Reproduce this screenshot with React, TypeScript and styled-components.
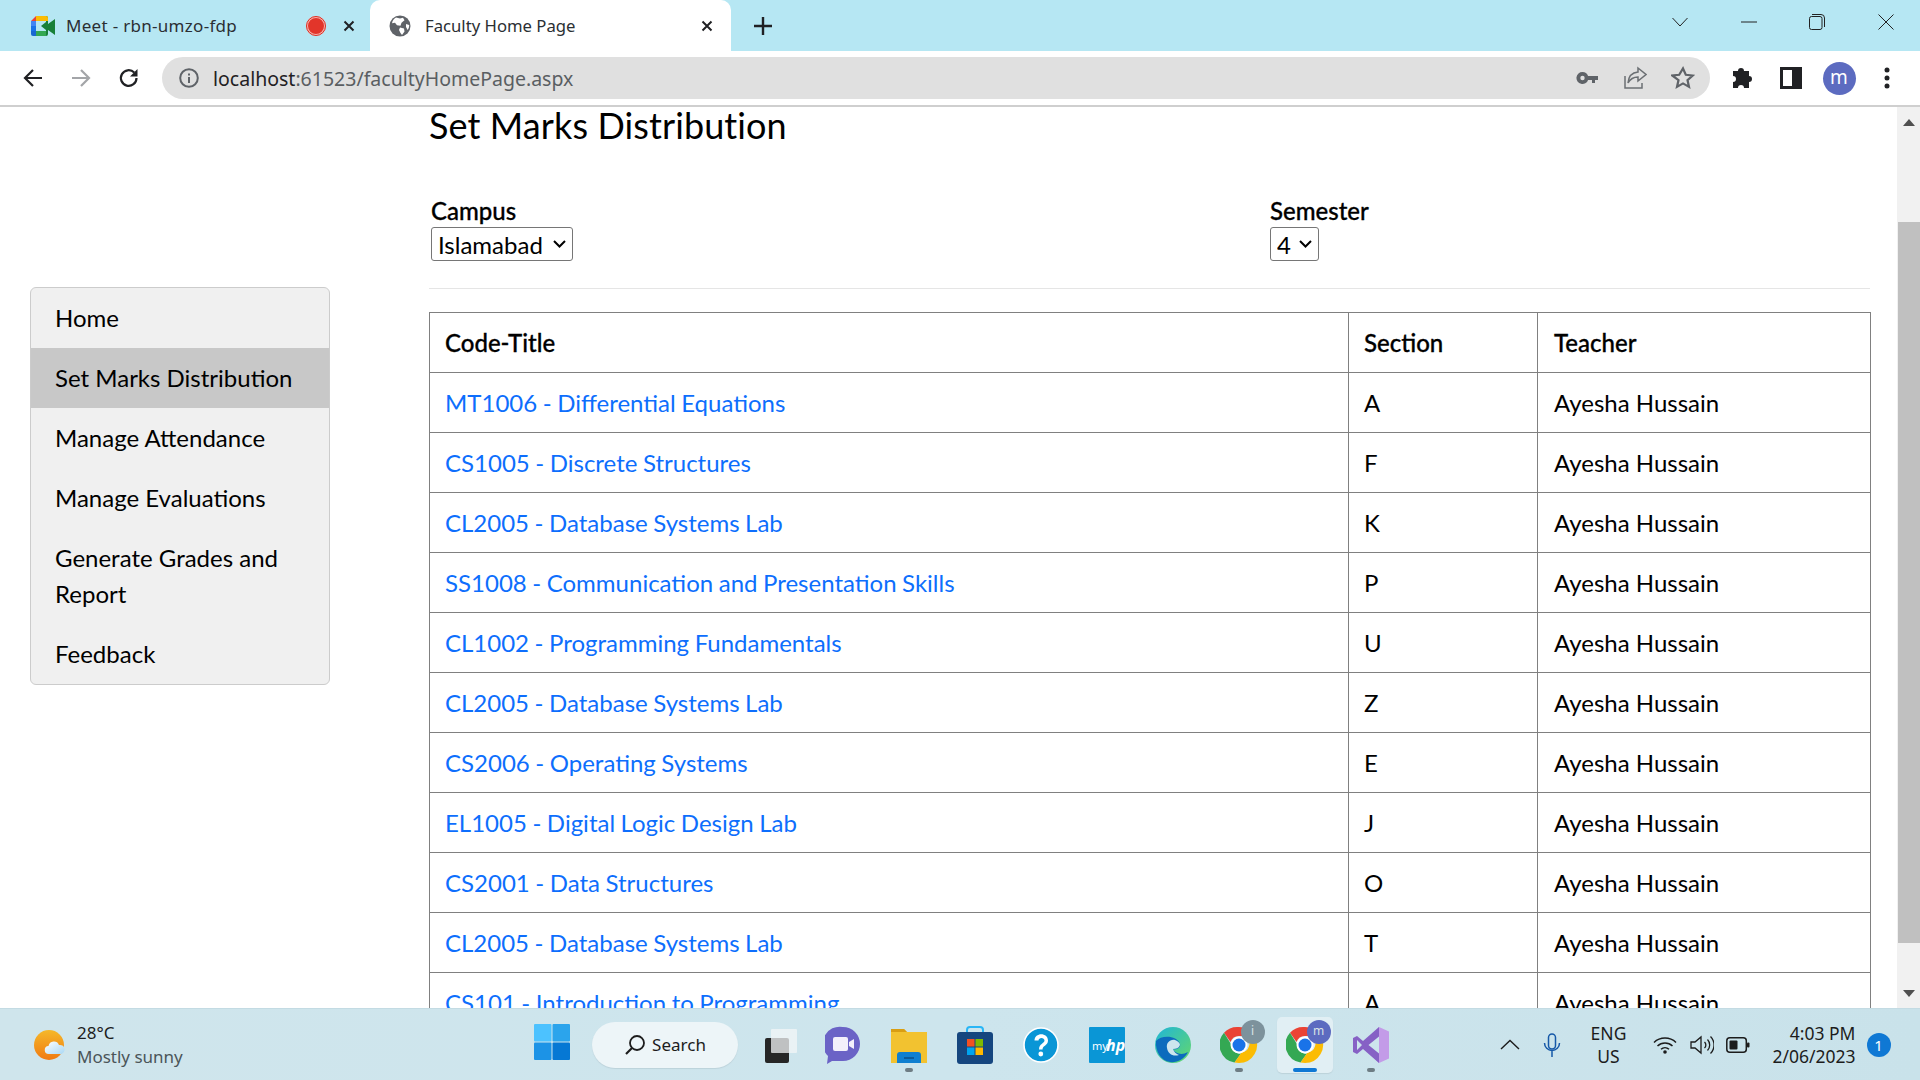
import React from 'react';
import styled, { createGlobalStyle } from 'styled-components';

const GlobalStyle = createGlobalStyle`
    html, body {
        margin: 0;
        padding: 0;
        height: 100%;
        overflow: hidden;
        background: #fff;
    }
    * {
        box-sizing: border-box;
    }
`;

const UI_FONT = `"Noto Sans", "Open Sans", sans-serif`;

const SELECT_ARROW = `url("data:image/svg+xml,%3Csvg xmlns='http://www.w3.org/2000/svg' width='13' height='8'%3E%3Cpath d='M1 1l5.500 5.500L12 1' stroke='%23000' stroke-width='2' fill='none'/%3E%3C/svg%3E")`;

interface Course {
    title: string;
    section: string;
}

const courses: Course[] = [
    { title: 'MT1006 - Differential Equations', section: 'A' },
    { title: 'CS1005 - Discrete Structures', section: 'F' },
    { title: 'CL2005 - Database Systems Lab', section: 'K' },
    { title: 'SS1008 - Communication and Presentation Skills', section: 'P' },
    { title: 'CL1002 - Programming Fundamentals', section: 'U' },
    { title: 'CL2005 - Database Systems Lab', section: 'Z' },
    { title: 'CS2006 - Operating Systems', section: 'E' },
    { title: 'EL1005 - Digital Logic Design Lab', section: 'J' },
    { title: 'CS2001 - Data Structures', section: 'O' },
    { title: 'CL2005 - Database Systems Lab', section: 'T' },
    { title: 'CS101 - Introduction to Programming', section: 'A' },
];

const menu = ['Home', 'Set Marks Distribution', 'Manage Attendance', 'Manage Evaluations', 'Generate Grades and Report', 'Feedback'];

const MeetIcon = () => (
    <svg width="24" height="20" viewBox="0 0 24 20">
        <path d="M5 0h10v5H5v5H0V5z" fill="#ea4335" />
        <path d="M5 0h10v5H5z" fill="#fbbc04" />
        <path d="M0 5h5v5H0z" fill="#4285f4" />
        <path d="M0 10h5v5H0z" fill="#1a73e8" />
        <path d="M0 15h5v5H2a2 2 0 0 1-2-2z" fill="#1967d2" />
        <path d="M5 15h10v5H5z" fill="#34a853" />
        <path d="M15 0v6l-5 4 5 4v6a2 2 0 0 0 2-2v-4l7 5V3l-7 5V2a2 2 0 0 0-2-2z" fill="#188038" />
        <path d="M15 0h-2v5h4V2a2 2 0 0 0-2-2z" fill="#fbbc04" />
    </svg>
);

const GlobeIcon = () => (
    <svg width="22" height="22" viewBox="0 0 22 22">
        <circle cx="11" cy="11" r="10.500" fill="#5f6368" />
        <path d="M7 2.500l4 1 3-.8 1.500 2.500-3 2.500-1 3-3.500-.5-2-2.500-3 .5C3.500 5.500 5 3.500 7 2.500zM11 12.500l4 1 .5 3-2.500 3.500-1.500-2-1.500-3zM17 9l3.200 1c0 2-.5 3.500-1.500 5L17 12z" fill="#fff" />
    </svg>
);

const CloseX = ({ color = '#202124' }: { color?: string }) => (
    <svg width="14" height="14" viewBox="0 0 14 14">
        <path d="M2.500 2.500l9 9M11.500 2.500l-9 9" stroke={color} strokeWidth="2" fill="none" />
    </svg>
);

const ChromeIcon = () => (
    <svg width="38" height="38" viewBox="0 0 38 38">
        <path d="M19 1a18 18 0 0 1 15.600 9H19a9 9 0 0 0-8.500 6L4 6.800A18 18 0 0 1 19 1z" fill="#ea4335" />
        <path d="M4 6.800L11.500 19a8 8 0 0 0 9.500 8.500L14.500 36.500A18 18 0 0 1 4 6.800z" fill="#34a853" />
        <path d="M34.600 10A18 18 0 0 1 19 37l-4.500-.5 7-10a9 9 0 0 0 4.500-16z" fill="#fbbc04" />
        <circle cx="19" cy="19" r="8.500" fill="#fff" />
        <circle cx="19" cy="19" r="6.500" fill="#1a73e8" />
    </svg>
);

const Omnibox = styled.div`
    flex: 1;
    height: 42px;
    margin: 0 9px;
    display: flex;
    align-items: center;
    background: #e0e0e0;
    border-radius: 21px;
    padding-right: 3px;
`;

const Page = styled.div`
    width: 1920px;
    height: 1080px;
    display: flex;
    flex-direction: column;
    overflow: hidden;
`;

const TabStrip = styled.div`
    height: 51px;
    flex: none;
    display: flex;
    background: #b6e7f3;
    font-family: ${UI_FONT};
    color: #2b2f33;
`;

const Tab = styled.div<{ $active?: boolean }>`
    width: ${(p) => (p.$active ? '361px' : '370px')};
    height: 51px;
    display: flex;
    align-items: center;
    padding-left: ${(p) => (p.$active ? '19px' : '31px')};
    background: ${(p) => (p.$active ? '#fff' : 'transparent')};
    border-radius: ${(p) => (p.$active ? '10px 10px 0 0' : '0')};
    font-size: ${(p) => (p.$active ? '16.700px' : '17px')};
    letter-spacing: ${(p) => (p.$active ? '0' : '0.3px')};
`;

const TabTitle = styled.span<{ $width: number }>`
    width: ${(p) => p.$width}px;
    margin-left: ${(p) => (p.$width > 250 ? '14px' : '11px')};
    white-space: nowrap;
`;

const RecordDot = styled.span`
    width: 20px;
    height: 20px;
    margin-right: 16px;
    border-radius: 50%;
    background: #e2352a;
    border: 2px solid #f8b2ac;
    outline: 1px solid #d93025;
    outline-offset: -1px;
`;

const NewTab = styled.div`
    width: 64px;
    display: flex;
    align-items: center;
    justify-content: center;
`;

const Spacer = styled.div`
    flex: 1;
`;

const WindowButton = styled.div`
    width: 68.500px;
    height: 44px;
    display: flex;
    align-items: center;
    justify-content: center;
`;

const Toolbar = styled.div`
    height: 56px;
    flex: none;
    display: flex;
    align-items: center;
    padding: 0 9px;
    background: #fff;
    border-bottom: 2px solid #cfcfcf;
`;

const ToolButton = styled.div`
    width: 48px;
    height: 42px;
    flex: none;
    display: flex;
    align-items: center;
    justify-content: center;
`;

const InfoSlot = styled.div`
    width: 54px;
    display: flex;
    justify-content: center;
`;

const Url = styled.div`
    flex: 1;
    margin-left: -3px;
    font-family: ${UI_FONT};
    font-size: 19.500px;
    color: #5a5e62;
    span {
        color: #1f2023;
    }
`;

const Avatar = styled.div`
    width: 33px;
    height: 33px;
    border-radius: 50%;
    background: #5c6bc0;
    color: #fff;
    font-family: ${UI_FONT};
    font-size: 19px;
    display: flex;
    align-items: center;
    justify-content: center;
    padding-bottom: 3px;
`;

const Viewport = styled.div`
    flex: 1;
    min-height: 0;
    display: flex;
    overflow: hidden;
    background: #fff;
    font-family: Lato, "Liberation Sans", sans-serif;
    font-size: 24px;
    line-height: 36px;
    color: #000;
`;

const Main = styled.div`
    width: 1897px;
    flex: none;
    display: grid;
    grid-template-columns: 300px 1441px;
    column-gap: 99px;
    padding-left: 30px;
    align-items: start;
`;

const SideNav = styled.nav`
    margin-top: 180px;
    background: #f0f0f0;
    border: 1px solid #ccc;
    border-radius: 6px;
    overflow: hidden;
`;

const NavItem = styled.div<{ $active?: boolean }>`
    padding: 12px 24px;
    background: ${(p) => (p.$active ? '#c8c8c8' : 'transparent')};
`;

const Content = styled.section`
    min-width: 0;
`;

const Title = styled.h1`
    margin: 0 0 52px;
    font-size: 36px;
    font-weight: 400;
    line-height: 36px;
    letter-spacing: 0.1px;
`;

const FilterRow = styled.div`
    display: grid;
    grid-template-columns: 839px 1fr;
    padding: 0 0 27px 2px;
    border-bottom: 1px solid #e5e5e5;
    margin-bottom: 23px;
`;

const Field = styled.div`
    display: flex;
    flex-direction: column;
    align-items: flex-start;
`;

const FieldLabel = styled.label`
    font-weight: 500;
    line-height: 31px;
    margin-bottom: 1px;
    -webkit-text-stroke: 0.3px #000;
`;

const Select = styled.select<{ $width: number }>`
    appearance: none;
    width: ${(p) => p.$width}px;
    font-family: Lato, "Liberation Sans", sans-serif;
    font-size: 24px;
    height: 34px;
    padding: 0 0 0 6px;
    color: #000;
    background: #fff ${SELECT_ARROW} no-repeat right 6px center;
    border: 1px solid #767676;
    border-radius: 3px;
`;

const Table = styled.table`
    width: 1441px;
    border-collapse: collapse;
    table-layout: fixed;
`;

const HeadCell = styled.th`
    height: 60px;
    padding: 0 15px;
    text-align: left;
    font-weight: 500;
    border: 1px solid #808080;
    -webkit-text-stroke: 0.3px #000;
    &:last-child {
        padding-left: 16px;
    }
`;

const Cell = styled.td`
    height: 60px;
    padding: 0 15px;
    border: 1px solid #808080;
    &:last-child {
        padding-left: 16px;
    }
`;

const CourseLink = styled.a`
    color: #0d6efd;
    text-decoration: none;
    word-spacing: -0.6px;
`;

const Scrollbar = styled.div`
    flex: 1;
    display: flex;
    flex-direction: column;
    align-items: stretch;
    background: #f1f1f1;
`;

const ScrollArrow = styled.div`
    height: 30px;
    flex: none;
    display: flex;
    align-items: center;
    justify-content: center;
`;

const Thumb = styled.div`
    flex: 1;
    margin: 85px 0 35px 1px;
    background: #c0c0c0;
`;

const Taskbar = styled.footer`
    height: 72px;
    flex: none;
    display: flex;
    align-items: center;
    background: linear-gradient(90deg, #cfe5ec, #cde5ed 50%, #c9e2ea);
    border-top: 1px solid #c3dbe3;
    font-family: ${UI_FONT};
    color: #1c1c1c;
`;

const Weather = styled.div`
    width: 534px;
    flex: none;
    display: flex;
    align-items: center;
    padding-left: 33px;
    gap: 10px;
`;

const WeatherText = styled.div`
    display: flex;
    flex-direction: column;
    font-size: 17px;
    line-height: 24px;
`;

const Muted = styled.span`
    color: #4b5559;
`;

const StartButton = styled.div`
    width: 58px;
    flex: none;
`;

const SearchPill = styled.div`
    width: 146px;
    height: 46px;
    flex: none;
    display: flex;
    align-items: center;
    justify-content: center;
    gap: 6px;
    margin-right: 5.500px;
    border-radius: 23px;
    background: #edf5f8;
    box-shadow: 0 1px 1px #bcd2da;
    font-size: 17px;
`;

const TaskIcon = styled.div<{ $active?: boolean }>`
    position: relative;
    width: 56px;
    height: 56px;
    margin: 0 5px;
    flex: none;
    display: flex;
    align-items: center;
    justify-content: center;
    border-radius: 5px;
    background: ${(p) => (p.$active ? '#e1eff4' : 'transparent')};
    box-shadow: ${(p) => (p.$active ? '0 1px 1px #bcd2da' : 'none')};
`;

const RunDot = styled.span<{ $active?: boolean }>`
    position: absolute;
    bottom: 1px;
    left: 50%;
    width: ${(p) => (p.$active ? '24px' : '8px')};
    height: 4px;
    margin-left: ${(p) => (p.$active ? '-12px' : '-4px')};
    border-radius: 2px;
    background: ${(p) => (p.$active ? '#0f78d4' : '#6e7d84')};
`;

const ProfileBadge = styled.span<{ $color: string }>`
    position: absolute;
    top: 3px;
    right: 2px;
    width: 24px;
    height: 24px;
    border-radius: 50%;
    background: ${(p) => p.$color};
    color: #d9e2e6;
    font-size: 12px;
    line-height: 22px;
    text-align: center;
`;

const Tray = styled.div`
    flex: 1;
    display: flex;
    align-items: center;
    padding-left: 88px;
`;

const TrayIcon = styled.div<{ $width: number }>`
    width: ${(p) => p.$width}px;
    flex: none;
    display: flex;
    justify-content: center;
`;

const Language = styled.div`
    width: 66px;
    flex: none;
    text-align: center;
    font-size: 17.500px;
    line-height: 23px;
`;

const Clock = styled.div`
    width: 96px;
    flex: none;
    text-align: right;
    font-size: 17.500px;
    line-height: 23px;
    white-space: nowrap;
`;

const Badge = styled.div`
    width: 24px;
    height: 24px;
    margin-left: 11px;
    flex: none;
    border-radius: 50%;
    background: #0f78d4;
    color: #fff;
    font-size: 15px;
    line-height: 24px;
    text-align: center;
`;

const App: React.FC = () => {
    return (
        <Page>
            <GlobalStyle />
            <TabStrip>
                <Tab>
                    <MeetIcon />
                    <TabTitle $width={240}>Meet - rbn-umzo-fdp</TabTitle>
                    <RecordDot />
                    <CloseX />
                </Tab>
                <Tab $active>
                    <GlobeIcon />
                    <TabTitle $width={275}>Faculty Home Page</TabTitle>
                    <CloseX />
                </Tab>
                <NewTab>
                    <svg width="20" height="20" viewBox="0 0 20 20">
                        <path d="M10 1v18M1 10h18" stroke="#202124" strokeWidth="2.400" />
                    </svg>
                </NewTab>
                <Spacer />
                <WindowButton>
                    <svg width="16" height="10" viewBox="0 0 16 10">
                        <path d="M.5 1L8 9l7.500-8" stroke="#222" fill="none" />
                    </svg>
                </WindowButton>
                <WindowButton>
                    <svg width="16" height="2" viewBox="0 0 16 2">
                        <path d="M0 1h16" stroke="#222" />
                    </svg>
                </WindowButton>
                <WindowButton>
                    <svg width="16" height="16" viewBox="0 0 16 16">
                        <rect x=".5" y="2.500" width="12.500" height="13" rx="2" stroke="#222" fill="none" />
                        <path d="M3 .5h9a3.500 3.500 0 0 1 3.500 3.500v9" stroke="#222" fill="none" />
                    </svg>
                </WindowButton>
                <WindowButton>
                    <svg width="16" height="16" viewBox="0 0 16 16">
                        <path d="M.5.5l15 15M15.500.5l-15 15" stroke="#222" />
                    </svg>
                </WindowButton>
            </TabStrip>
            <Toolbar>
                <ToolButton>
                    <svg width="22" height="22" viewBox="0 0 22 22">
                        <path d="M20 11H3M11 3l-8 8 8 8" stroke="#202124" strokeWidth="2.200" fill="none" />
                    </svg>
                </ToolButton>
                <ToolButton>
                    <svg width="22" height="22" viewBox="0 0 22 22">
                        <path d="M2 11h17M11 3l8 8-8 8" stroke="#a3a5a8" strokeWidth="2.200" fill="none" />
                    </svg>
                </ToolButton>
                <ToolButton>
                    <svg width="22" height="22" viewBox="0 0 22 22">
                        <path d="M18.500 11a7.800 7.800 0 1 1-2.300-5.500" stroke="#202124" strokeWidth="2.200" fill="none" />
                        <path d="M19.500 2v7.500H12z" fill="#202124" />
                    </svg>
                </ToolButton>
                <Omnibox>
                    <InfoSlot>
                        <svg width="20" height="20" viewBox="0 0 20 20">
                            <circle cx="10" cy="10" r="8.800" stroke="#5f6368" strokeWidth="2" fill="none" />
                            <path d="M9 9h2v6H9zM9 5.500h2v2H9z" fill="#5f6368" />
                        </svg>
                    </InfoSlot>
                    <Url><span>localhost</span>:61523/facultyHomePage.aspx</Url>
                    <ToolButton>
                        <svg width="22" height="14" viewBox="0 0 22 14">
                            <path d="M6.500 1a6 6 0 0 1 5.600 4H22v4h-3v3h-3V9h-3.900a6 6 0 1 1-5.600-8zm0 3.800a2.200 2.200 0 1 0 0 4.400 2.200 2.200 0 0 0 0-4.400z" fill="#5f6368" />
                        </svg>
                    </ToolButton>
                    <ToolButton>
                        <svg width="24" height="24" viewBox="0 0 24 24">
                            <path d="M2 10v12h17v-5" stroke="#6b6f73" strokeWidth="1.500" fill="none" />
                            <path d="M15 2l8 6.500-8 6.500v-4c-4.500 0-7.500 1.500-10 6 .5-6 4-10.500 10-11z" stroke="#6b6f73" strokeWidth="1.500" fill="none" />
                        </svg>
                    </ToolButton>
                    <ToolButton>
                        <svg width="24" height="24" viewBox="0 0 24 24">
                            <path d="M12 2.500l2.800 6.300 6.900.7-5.200 4.600 1.500 6.800-6-3.500-6 3.500 1.500-6.800L1.300 9.500l6.900-.7z" stroke="#5f6368" strokeWidth="2.200" fill="none" />
                        </svg>
                    </ToolButton>
                </Omnibox>
                <ToolButton>
                    <svg width="22" height="22" viewBox="0 0 22 22">
                        <path d="M9 1a3 3 0 0 1 3 3h5v5a3 3 0 0 1 0 6v6h-5a3 3 0 0 0-6 0H1v-6a3 3 0 0 0 0-6V4h5a3 3 0 0 1 3-3z" fill="#202124" />
                    </svg>
                </ToolButton>
                <ToolButton>
                    <svg width="22" height="22" viewBox="0 0 22 22">
                        <path d="M0 0h22v22H0zM3 3v16h9V3z" fill="#202124" fillRule="evenodd" />
                    </svg>
                </ToolButton>
                <ToolButton>
                    <Avatar>m</Avatar>
                </ToolButton>
                <ToolButton>
                    <svg width="6" height="22" viewBox="0 0 6 22">
                        <circle cx="3" cy="3" r="2.500" fill="#202124" />
                        <circle cx="3" cy="11" r="2.500" fill="#202124" />
                        <circle cx="3" cy="19" r="2.500" fill="#202124" />
                    </svg>
                </ToolButton>
            </Toolbar>
            <Viewport>
                <Main>
                    <SideNav>
                        {menu.map((item) => (
                            <NavItem key={item} $active={item === 'Set Marks Distribution'}>{item}</NavItem>
                        ))}
                    </SideNav>
                    <Content>
                        <Title>Set Marks Distribution</Title>
                        <FilterRow>
                            <Field>
                                <FieldLabel>Campus</FieldLabel>
                                <Select $width={142} defaultValue="Islamabad">
                                    <option>Islamabad</option>
                                </Select>
                            </Field>
                            <Field>
                                <FieldLabel>Semester</FieldLabel>
                                <Select $width={49} defaultValue="4">
                                    <option>4</option>
                                </Select>
                            </Field>
                        </FilterRow>
                        <Table>
                            <colgroup>
                                <col width="919" />
                                <col width="189" />
                                <col width="333" />
                            </colgroup>
                            <thead>
                                <tr>
                                    <HeadCell>Code-Title</HeadCell>
                                    <HeadCell>Section</HeadCell>
                                    <HeadCell>Teacher</HeadCell>
                                </tr>
                            </thead>
                            <tbody>
                                {courses.map((course) => (
                                    <tr key={course.title + course.section}>
                                        <Cell><CourseLink href="#">{course.title}</CourseLink></Cell>
                                        <Cell>{course.section}</Cell>
                                        <Cell>Ayesha Hussain</Cell>
                                    </tr>
                                ))}
                            </tbody>
                        </Table>
                    </Content>
                </Main>
                <Scrollbar>
                    <ScrollArrow>
                        <svg width="12" height="7" viewBox="0 0 12 7"><path d="M0 7l6-7 6 7z" fill="#505050" /></svg>
                    </ScrollArrow>
                    <Thumb />
                    <ScrollArrow>
                        <svg width="12" height="7" viewBox="0 0 12 7"><path d="M0 0l6 7 6-7z" fill="#505050" /></svg>
                    </ScrollArrow>
                </Scrollbar>
            </Viewport>
            <Taskbar>
                <Weather>
                    <svg width="34" height="34" viewBox="0 0 34 34">
                        <defs>
                            <linearGradient id="sun" x1="0" y1="0" x2="0" y2="1">
                                <stop offset="0" stopColor="#f5b82a" />
                                <stop offset="1" stopColor="#f07a12" />
                            </linearGradient>
                            <linearGradient id="cloud" x1="0" y1="0" x2="1" y2="1">
                                <stop offset="0" stopColor="#ffffff" />
                                <stop offset="1" stopColor="#a9d8f5" />
                            </linearGradient>
                        </defs>
                        <circle cx="16" cy="17" r="15" fill="url(#sun)" />
                        <path d="M16 26a4 4 0 0 1-.5-8 5.500 5.500 0 0 1 10.500-1 4.500 4.500 0 0 1 2 9z" fill="url(#cloud)" />
                    </svg>
                    <WeatherText>
                        <span>28°C</span>
                        <Muted>Mostly sunny</Muted>
                    </WeatherText>
                </Weather>
                <StartButton>
                    <svg width="36" height="36" viewBox="0 0 36 36">
                        <rect width="17.500" height="17.500" rx="1" fill="#4cc2ff" />
                        <rect x="18.500" width="17.500" height="17.500" rx="1" fill="#2ba4ec" />
                        <rect y="18.500" width="17.500" height="17.500" rx="1" fill="#1c93e6" />
                        <rect x="18.500" y="18.500" width="17.500" height="17.500" rx="1" fill="#0678d4" />
                    </svg>
                </StartButton>
                <SearchPill>
                    <svg width="22" height="22" viewBox="0 0 22 22">
                        <circle cx="13" cy="9" r="7" stroke="#1c1c1c" strokeWidth="1.800" fill="none" />
                        <path d="M8 14l-6 6" stroke="#1c1c1c" strokeWidth="2.200" />
                    </svg>
                    Search
                </SearchPill>
                <TaskIcon>
                    <svg width="40" height="40" viewBox="0 0 40 40">
                        <rect x="8" y="13" width="24" height="25" rx="2" fill="#262626" />
                        <rect x="14" y="4" width="26" height="24" rx="1" fill="#f3f6f7" opacity=".75" />
                    </svg>
                </TaskIcon>
                <TaskIcon>
                    <svg width="36" height="38" viewBox="0 0 36 38">
                        <path d="M18 1a17 17 0 0 1 0 34H7l-5 3 1-8A17 17 0 0 1 18 1z" fill="#6b63c6" />
                        <rect x="8" y="11" width="15" height="14" rx="2" fill="#f3f0fb" />
                        <path d="M24 16l5-3v10l-5-3z" fill="#f3f0fb" />
                    </svg>
                </TaskIcon>
                <TaskIcon>
                    <svg width="36" height="36" viewBox="0 0 36 36">
                        <path d="M0 2h13l3 3h20v31H0z" fill="#f2c230" />
                        <path d="M0 2h13l3 3H0z" fill="#d99e13" />
                        <path d="M6 36V28a3 3 0 0 1 3-3h18a3 3 0 0 1 3 3v8z" fill="#0f7fd0" />
                        <path d="M13 31h10" stroke="#0b5a99" strokeWidth="2" />
                    </svg>
                    <RunDot />
                </TaskIcon>
                <TaskIcon>
                    <svg width="36" height="38" viewBox="0 0 36 38">
                        <path d="M10 8V4a3 3 0 0 1 3-3h10a3 3 0 0 1 3 3v4" stroke="#29b6f6" strokeWidth="2" fill="none" />
                        <rect y="6" width="36" height="32" rx="3" fill="#15467f" />
                        <rect x="10" y="13" width="7.500" height="7.500" fill="#f25022" />
                        <rect x="18.500" y="13" width="7.500" height="7.500" fill="#7fba00" />
                        <rect x="10" y="21.500" width="7.500" height="7.500" fill="#00a4ef" />
                        <rect x="18.500" y="21.500" width="7.500" height="7.500" fill="#ffb900" />
                    </svg>
                </TaskIcon>
                <TaskIcon>
                    <svg width="36" height="36" viewBox="0 0 36 36">
                        <circle cx="18" cy="18" r="17" fill="#0a96d6" stroke="#fff" strokeWidth="1.600" />
                        <path d="M11.500 13.500c0-8.500 13.500-8.500 13.500 0 0 5-5.500 5-5.500 9h-3.500c0-6 5.500-6 5.500-9 0-3.500-6-3.500-6 0z" fill="#fff" />
                        <circle cx="17.800" cy="27" r="2.400" fill="#fff" />
                    </svg>
                </TaskIcon>
                <TaskIcon>
                    <svg width="36" height="36" viewBox="0 0 36 36">
                        <rect width="36" height="36" rx="1" fill="#0a96d6" />
                        <text x="3" y="23" fill="#fff" fontSize="11" fontFamily="Noto Sans">my</text>
                        <text x="17" y="24" fill="#fff" fontSize="16" fontStyle="italic" fontWeight="700" fontFamily="Noto Sans">hp</text>
                    </svg>
                </TaskIcon>
                <TaskIcon>
                    <svg width="36" height="36" viewBox="0 0 36 36">
                        <defs>
                            <linearGradient id="edge" x1="0" y1="0" x2="1" y2="1">
                                <stop offset="0" stopColor="#1fb5d8" />
                                <stop offset="1" stopColor="#65d86a" />
                            </linearGradient>
                        </defs>
                        <circle cx="18" cy="18" r="18" fill="url(#edge)" />
                        <path d="M1 14C6 8 22 8 25 17c1 4-4 6-7 5 2 4 8 7 15 3-4 8-12 11-18 10C6 34 0 24 1 14z" fill="#0c6bbd" />
                        <path d="M12 21c-1-5 3-9 8-8 3 1 5 3 5 5-1 3-4 4-7 4 1 3 3 5 6 6-6 2-11-1-12-7z" fill="#cde5ed" />
                    </svg>
                </TaskIcon>
                <TaskIcon>
                    <ChromeIcon />
                    <ProfileBadge $color="#7d929c">i</ProfileBadge>
                    <RunDot />
                </TaskIcon>
                <TaskIcon $active>
                    <ChromeIcon />
                    <ProfileBadge $color="#5c6bc0">m</ProfileBadge>
                    <RunDot $active />
                </TaskIcon>
                <TaskIcon>
                    <svg width="36" height="36" viewBox="0 0 36 36">
                        <path d="M26 0l10 4.500v27L26 36 9 20z" fill="#c39be8" />
                        <path d="M26 0v36L10 22l-6 5-4-2V11l4-2 6 5z" fill="#8661c5" />
                        <path d="M4 13v10l5-5zM26 9.500L15.500 18 26 26.500z" fill="#cde5ed" />
                    </svg>
                    <RunDot />
                </TaskIcon>
                <Tray>
                    <TrayIcon $width={36}>
                        <svg width="20" height="11" viewBox="0 0 20 11"><path d="M1 10l9-8.500 9 8.500" stroke="#1c1c1c" strokeWidth="1.400" fill="none" /></svg>
                    </TrayIcon>
                    <TrayIcon $width={48}>
                        <svg width="18" height="24" viewBox="0 0 18 24">
                            <rect x="5.500" y="1" width="7" height="15" rx="3.500" stroke="#1558a8" strokeWidth="1.500" fill="none" />
                            <path d="M1.500 10a7.500 7.500 0 0 0 15 0M9 18v6" stroke="#1558a8" strokeWidth="1.500" fill="none" />
                        </svg>
                    </TrayIcon>
                    <Language>ENG<br />US</Language>
                    <TrayIcon $width={46}>
                        <svg width="24" height="18" viewBox="0 0 24 18">
                            <path d="M1 6.500a16 16 0 0 1 22 0M4.500 10a11 11 0 0 1 15 0M8 13.300a6 6 0 0 1 8 0" stroke="#1c1c1c" strokeWidth="1.500" fill="none" />
                            <circle cx="12" cy="16" r="1.800" fill="#1c1c1c" />
                        </svg>
                    </TrayIcon>
                    <TrayIcon $width={28}>
                        <svg width="24" height="20" viewBox="0 0 24 20">
                            <path d="M1 7v6h4l6 5V2L5 7z" stroke="#1c1c1c" strokeWidth="1.300" fill="none" />
                            <path d="M14.500 7a4 4 0 0 1 0 6M17.500 4.500a8 8 0 0 1 0 11M20.500 1.500a12 12 0 0 1 0 17" stroke="#1c1c1c" strokeWidth="1.300" fill="none" />
                        </svg>
                    </TrayIcon>
                    <TrayIcon $width={44}>
                        <svg width="24" height="16" viewBox="0 0 24 16">
                            <rect x=".8" y=".8" width="19.500" height="14.400" rx="3" stroke="#1c1c1c" strokeWidth="1.500" fill="none" />
                            <rect x="3.500" y="3.500" width="8" height="9" rx="1" fill="#1c1c1c" />
                            <rect x="21" y="5.500" width="2.500" height="5" rx="1" fill="#1c1c1c" />
                        </svg>
                    </TrayIcon>
                    <Clock>4:03 PM<br />2/06/2023</Clock>
                    <Badge>1</Badge>
                </Tray>
            </Taskbar>
        </Page>
    );
};

export default App;
